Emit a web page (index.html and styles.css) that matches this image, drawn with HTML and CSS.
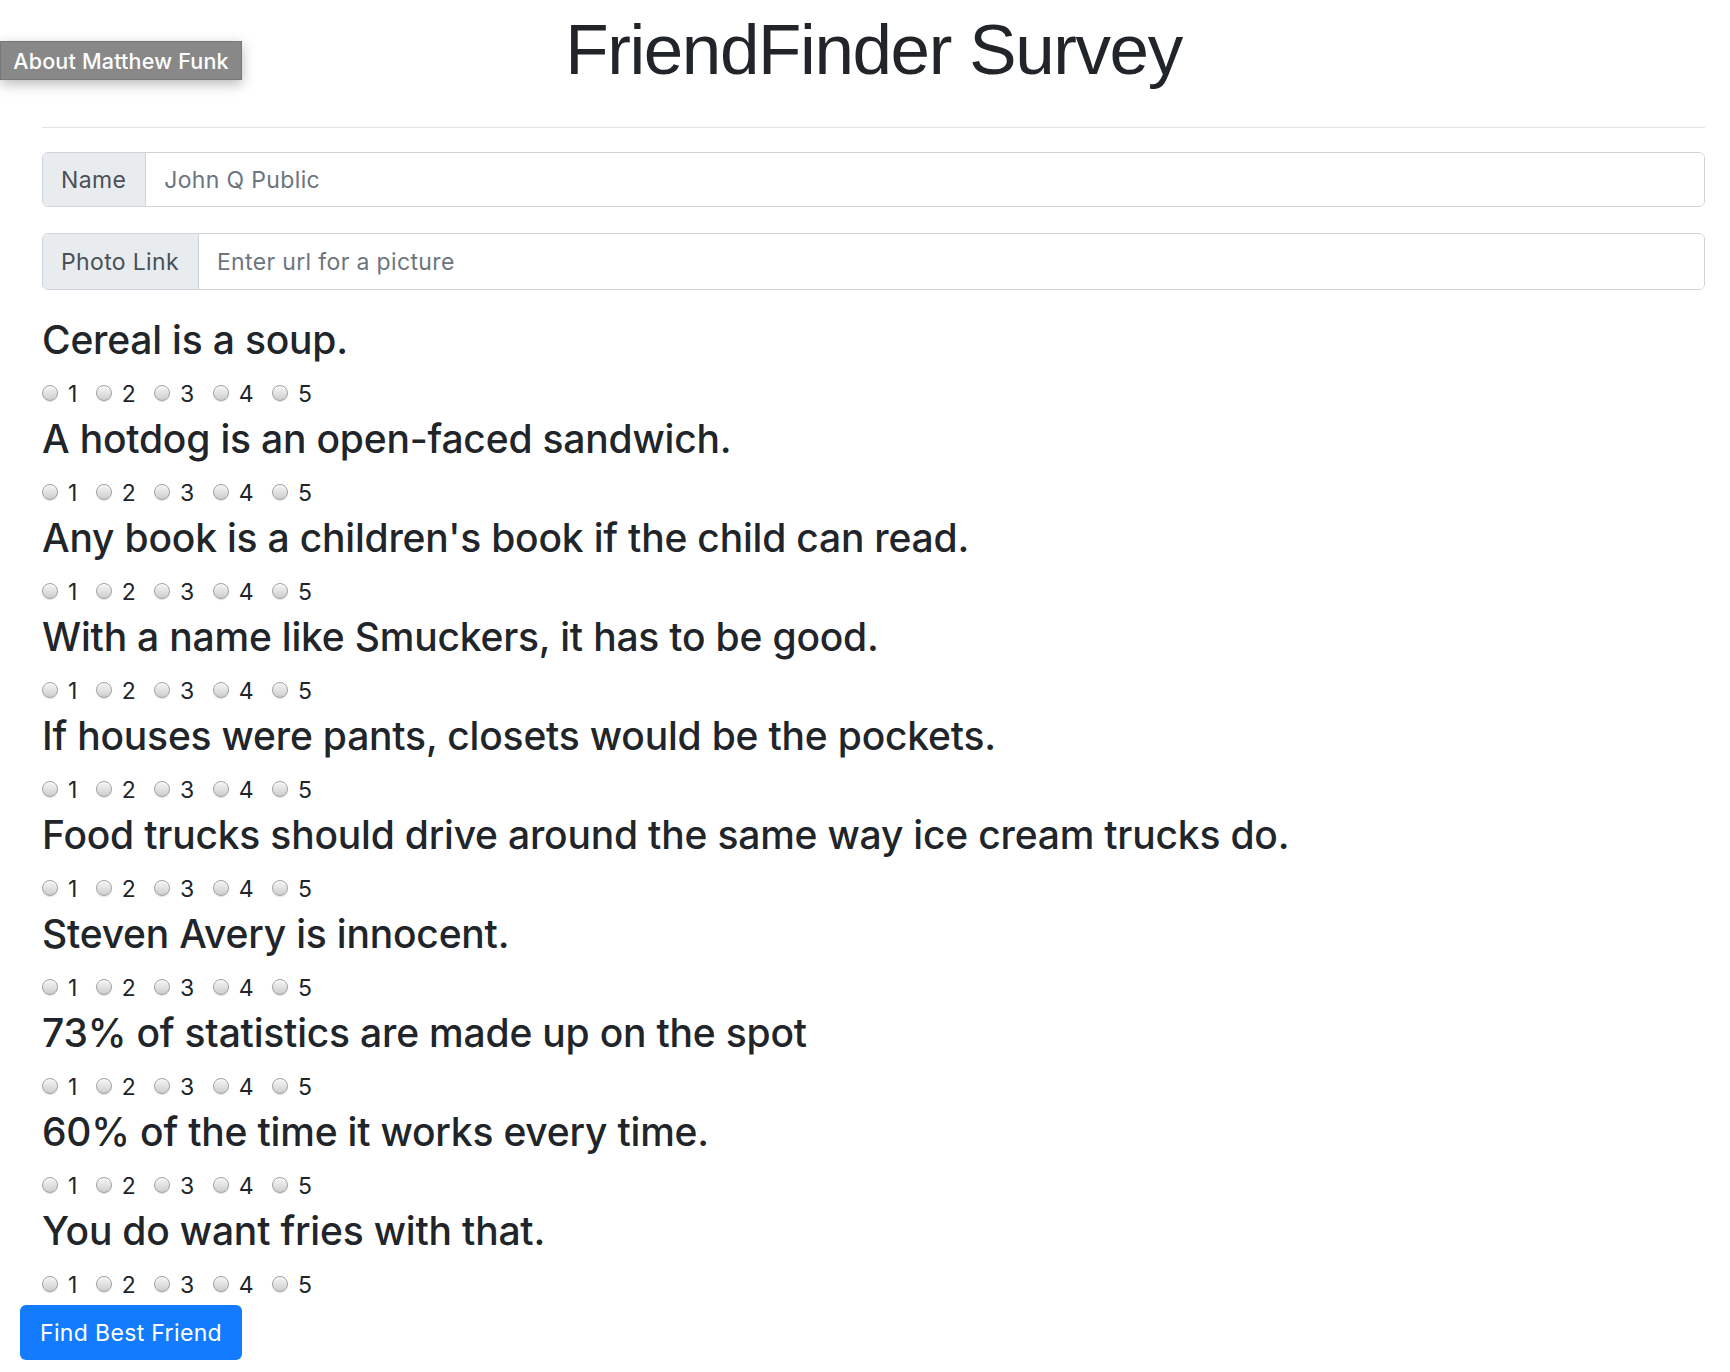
FILE: index.html
```html
<!DOCTYPE html>
<html lang="en">
<head>
<meta charset="utf-8">
<title>FriendFinder Survey</title>
<link rel="stylesheet" href="styles.css">
</head>
<body>
<a class="about-btn" href="#">About Matthew Funk</a>
<div class="page">
  <div class="content">
    <h1 class="title">FriendFinder Survey</h1>
    <hr class="divider">
    <div class="input-group group-name">
      <span class="addon">Name</span>
      <input class="field" type="text" placeholder="John Q Public">
    </div>
    <div class="input-group group-photo">
      <span class="addon">Photo Link</span>
      <input class="field" type="text" placeholder="Enter url for a picture">
    </div>

    <div class="question">
      <h3 class="q-text">Cereal is a soup.</h3>
      <div class="options">
        <label class="opt"><input type="radio" name="q1"><span>1</span></label>
        <label class="opt"><input type="radio" name="q1"><span>2</span></label>
        <label class="opt"><input type="radio" name="q1"><span>3</span></label>
        <label class="opt"><input type="radio" name="q1"><span>4</span></label>
        <label class="opt"><input type="radio" name="q1"><span>5</span></label>
      </div>
    </div>
    <div class="question">
      <h3 class="q-text">A hotdog is an open-faced sandwich.</h3>
      <div class="options">
        <label class="opt"><input type="radio" name="q2"><span>1</span></label>
        <label class="opt"><input type="radio" name="q2"><span>2</span></label>
        <label class="opt"><input type="radio" name="q2"><span>3</span></label>
        <label class="opt"><input type="radio" name="q2"><span>4</span></label>
        <label class="opt"><input type="radio" name="q2"><span>5</span></label>
      </div>
    </div>
    <div class="question">
      <h3 class="q-text">Any book is a children's book if the child can read.</h3>
      <div class="options">
        <label class="opt"><input type="radio" name="q3"><span>1</span></label>
        <label class="opt"><input type="radio" name="q3"><span>2</span></label>
        <label class="opt"><input type="radio" name="q3"><span>3</span></label>
        <label class="opt"><input type="radio" name="q3"><span>4</span></label>
        <label class="opt"><input type="radio" name="q3"><span>5</span></label>
      </div>
    </div>
    <div class="question">
      <h3 class="q-text">With a name like Smuckers, it has to be good.</h3>
      <div class="options">
        <label class="opt"><input type="radio" name="q4"><span>1</span></label>
        <label class="opt"><input type="radio" name="q4"><span>2</span></label>
        <label class="opt"><input type="radio" name="q4"><span>3</span></label>
        <label class="opt"><input type="radio" name="q4"><span>4</span></label>
        <label class="opt"><input type="radio" name="q4"><span>5</span></label>
      </div>
    </div>
    <div class="question">
      <h3 class="q-text">If houses were pants, closets would be the pockets.</h3>
      <div class="options">
        <label class="opt"><input type="radio" name="q5"><span>1</span></label>
        <label class="opt"><input type="radio" name="q5"><span>2</span></label>
        <label class="opt"><input type="radio" name="q5"><span>3</span></label>
        <label class="opt"><input type="radio" name="q5"><span>4</span></label>
        <label class="opt"><input type="radio" name="q5"><span>5</span></label>
      </div>
    </div>
    <div class="question">
      <h3 class="q-text">Food trucks should drive around the same way ice cream trucks do.</h3>
      <div class="options">
        <label class="opt"><input type="radio" name="q6"><span>1</span></label>
        <label class="opt"><input type="radio" name="q6"><span>2</span></label>
        <label class="opt"><input type="radio" name="q6"><span>3</span></label>
        <label class="opt"><input type="radio" name="q6"><span>4</span></label>
        <label class="opt"><input type="radio" name="q6"><span>5</span></label>
      </div>
    </div>
    <div class="question">
      <h3 class="q-text">Steven Avery is innocent.</h3>
      <div class="options">
        <label class="opt"><input type="radio" name="q7"><span>1</span></label>
        <label class="opt"><input type="radio" name="q7"><span>2</span></label>
        <label class="opt"><input type="radio" name="q7"><span>3</span></label>
        <label class="opt"><input type="radio" name="q7"><span>4</span></label>
        <label class="opt"><input type="radio" name="q7"><span>5</span></label>
      </div>
    </div>
    <div class="question">
      <h3 class="q-text">73% of statistics are made up on the spot</h3>
      <div class="options">
        <label class="opt"><input type="radio" name="q8"><span>1</span></label>
        <label class="opt"><input type="radio" name="q8"><span>2</span></label>
        <label class="opt"><input type="radio" name="q8"><span>3</span></label>
        <label class="opt"><input type="radio" name="q8"><span>4</span></label>
        <label class="opt"><input type="radio" name="q8"><span>5</span></label>
      </div>
    </div>
    <div class="question">
      <h3 class="q-text">60% of the time it works every time.</h3>
      <div class="options">
        <label class="opt"><input type="radio" name="q9"><span>1</span></label>
        <label class="opt"><input type="radio" name="q9"><span>2</span></label>
        <label class="opt"><input type="radio" name="q9"><span>3</span></label>
        <label class="opt"><input type="radio" name="q9"><span>4</span></label>
        <label class="opt"><input type="radio" name="q9"><span>5</span></label>
      </div>
    </div>
    <div class="question">
      <h3 class="q-text">You do want fries with that.</h3>
      <div class="options">
        <label class="opt"><input type="radio" name="q10"><span>1</span></label>
        <label class="opt"><input type="radio" name="q10"><span>2</span></label>
        <label class="opt"><input type="radio" name="q10"><span>3</span></label>
        <label class="opt"><input type="radio" name="q10"><span>4</span></label>
        <label class="opt"><input type="radio" name="q10"><span>5</span></label>
      </div>
    </div>
  </div>
  <button class="find-btn" type="button">Find Best Friend</button>
</div>
</body>
</html>
```

FILE: styles.css
```css
* { box-sizing: border-box; }

html, body {
  margin: 0;
  padding: 0;
  background: #ffffff;
}

body {
  font-family: Inter, "Noto Sans", "Liberation Sans", sans-serif;
  color: #212529;
  font-size: 23px;
  letter-spacing: 0.35px;
}

.about-btn {
  position: absolute;
  top: 41px;
  left: 0;
  width: 242px;
  height: 39px;
  display: flex;
  align-items: center;
  justify-content: center;
  background: #888888;
  border: 1px solid #767676;
  color: #ffffff;
  font-size: 21.5px;
  font-weight: 500;
  letter-spacing: 0.2px;
  text-decoration: none;
  box-shadow: 0 4px 12px rgba(0, 0, 0, 0.28);
  white-space: nowrap;
}

.page {
  padding-left: 20px;
}

.content {
  margin-left: 22px;
  width: 1663px;
}

.title {
  margin: 7px 0 0 0;
  font-family: "Liberation Sans", Arial, sans-serif;
  font-weight: 400;
  font-size: 71px;
  line-height: 85px;
  letter-spacing: -1.4px;
  text-align: center;
  color: #212529;
}

.divider {
  margin: 35px 0 24px 0;
  border: 0;
  border-top: 1px solid #e2e2e2;
  height: 0;
}

.input-group {
  display: flex;
  align-items: stretch;
  width: 100%;
  border: 1px solid #ced4da;
  border-radius: 6px;
  overflow: hidden;
}

.group-name {
  height: 55px;
  margin-bottom: 26px;
}

.group-photo {
  height: 57px;
  margin-bottom: 26px;
}

.addon {
  display: flex;
  align-items: center;
  padding: 0 19px 0 18px;
  background: #e9ecef;
  border-right: 1px solid #ced4da;
  color: #495057;
  font-size: 23px;
  white-space: nowrap;
}

.field {
  flex: 1;
  border: 0;
  outline: none;
  padding: 0 19px 0 18px;
  font-family: inherit;
  font-size: 23px;
  letter-spacing: 0.35px;
  color: #495057;
  background: #ffffff;
}

.field::placeholder {
  color: #6c757d;
  opacity: 1;
}

.q-text {
  margin: 0 0 14px 0;
  font-size: 39px;
  line-height: 47px;
  font-weight: 500;
  letter-spacing: -0.2px;
  color: #212529;
}

.options {
  display: flex;
  align-items: center;
  gap: 18px;
  height: 34px;
  line-height: 34px;
  margin-bottom: 4px;
}

.question:last-child .options {
  margin-bottom: 3px;
}

.opt {
  display: inline-flex;
  align-items: center;
  font-size: 23px;
  color: #212529;
}

.opt input {
  appearance: none;
  -webkit-appearance: none;
  width: 16px;
  height: 16px;
  margin: 0 10px 2px 0;
  border-radius: 50%;
  border: 1px solid #a0a0a0;
  background: linear-gradient(to bottom, #f5f5f5 0%, #e0e0e0 55%, #cdcdcd 100%);
  box-shadow: inset 0 1px 0 rgba(255, 255, 255, 0.8), 0 1px 1px rgba(0, 0, 0, 0.12);
}

.find-btn {
  display: block;
  width: 222px;
  height: 55px;
  padding: 0;
  border: 0;
  border-radius: 6px;
  background: #137cfe;
  color: #ffffff;
  font-family: inherit;
  font-size: 23px;
  letter-spacing: 0.35px;
  font-weight: 400;
  cursor: pointer;
}
```
